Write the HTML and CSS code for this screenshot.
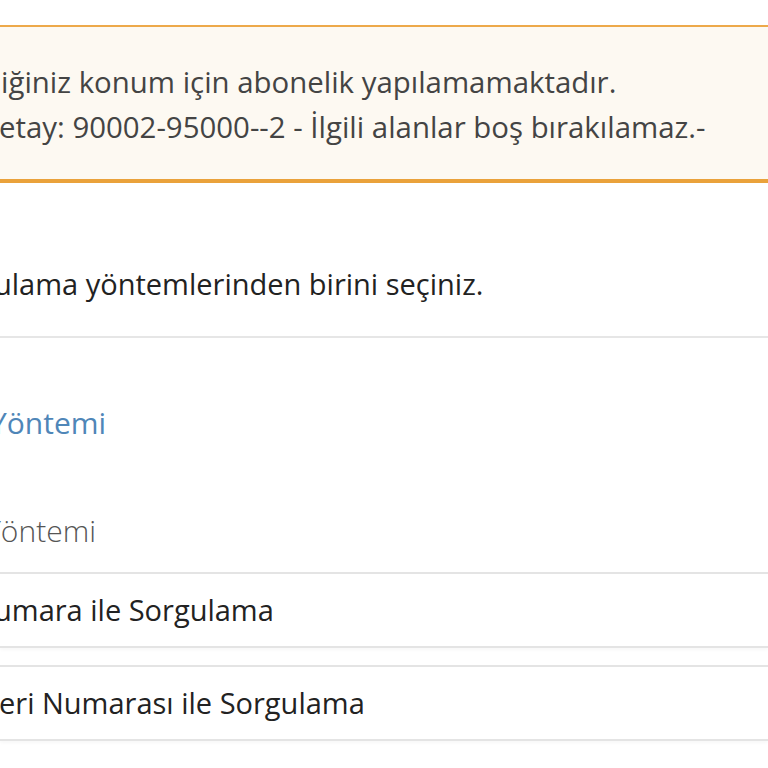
FILE: index.html
```html
<!DOCTYPE html>
<html lang="tr">
<head>
    <meta charset="UTF-8">
    <meta name="viewport" content="width=device-width, initial-scale=1.0">
    <title>Sorgulama</title>
    <link rel="stylesheet" href="styles.css">
</head>
<body>
    <div class="page">
        <div class="alert">
            <p class="alertLine first">iğiniz konum için abonelik yapılamamaktadır.</p>
            <p class="alertLine second">etay: 90002-95000--2 - İlgili alanlar boş bırakılamaz.-</p>
        </div>

        <div class="intro">
            <p class="introText">ulama yöntemlerinden birini seçiniz.</p>
        </div>

        <h2 class="sectionTitle">Yöntemi</h2>

        <div class="methodLabel">Yöntemi</div>

        <ul class="methodList">
            <li class="methodItem"><span class="cutU">umara ile Sorgulama</span></li>
            <li class="methodItem"><span class="cutE">eri Numarası ile Sorgulama</span></li>
        </ul>
    </div>
</body>
</html>
```

FILE: styles.css
```css
body {
    margin: 0;
    font-family: "Open Sans", "Noto Sans", sans-serif;
    background-color: #ffffff;
    overflow: hidden;
}

.page {
    padding-top: 25px;
}

.alert {
    background-color: #fdf9f2;
    border-top: 2px solid #eda94a;
    border-bottom: 4px solid #eaa23b;
    padding: 33px 0 29px;
    color: #444444;
    font-size: 29.4px;
}
.alertLine {
    margin: 0;
    line-height: 45px;
    white-space: nowrap;
}
.alertLine.first {
    text-indent: 1px;
}
.alertLine.second {
    text-indent: -1px;
}

.intro {
    border-bottom: 2px solid #e6e6e6;
    padding: 83px 0 34px;
}
.introText {
    margin: 0;
    font-size: 29px;
    line-height: 36px;
    color: #222222;
    text-indent: -6px;
    white-space: nowrap;
}

.sectionTitle {
    margin: 0;
    padding-top: 65px;
    font-size: 30px;
    font-weight: 400;
    line-height: 40px;
    color: #4f86b8;
    text-indent: -10px;
}

.methodLabel {
    margin-top: 68px;
    padding-bottom: 21px;
    font-size: 30px;
    font-weight: 300;
    line-height: 40px;
    color: #555555;
    text-indent: -15px;
}

.methodList {
    list-style: none;
    margin: 0;
    padding: 0;
}
.methodItem {
    border-top: 2px solid #e4e4e4;
    border-bottom: 2px solid #e4e4e4;
    box-shadow: 0 2px 3px rgba(0, 0, 0, 0.03);
    padding: 18px 0;
    font-size: 29px;
    line-height: 36px;
    color: #222222;
    margin-bottom: 17px;
    white-space: nowrap;
}
.cutU {
    display: inline-block;
    margin-left: -6px;
}
.cutE {
    display: inline-block;
    margin-left: -1px;
}
```
